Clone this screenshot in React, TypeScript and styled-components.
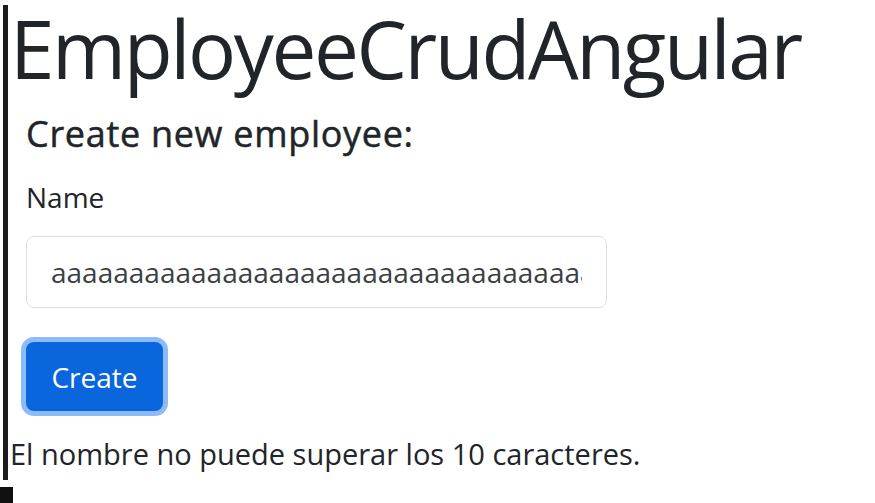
import React from 'react';
import styled, { createGlobalStyle } from 'styled-components';

const GlobalStyle = createGlobalStyle`
  html, body {
    margin: 0;
    padding: 0;
    background: #ffffff;
  }
  body {
    font-family: 'Open Sans', 'Noto Sans', sans-serif;
    color: #212529;
  }
`;

const Frame = styled.div`
  margin: 5px 0 0 3px;
  border-left: 5px solid #1c1c1c;
  padding-left: 2px;
  height: 475px;
  box-sizing: border-box;
`;

const Title = styled.h1`
  margin: 0;
  font-size: 80px;
  font-weight: 400;
  letter-spacing: -2.4px;
  line-height: 86px;
  color: #212529;
  white-space: nowrap;
`;

const Form = styled.form`
  padding-left: 16px;
`;

const Heading = styled.h2`
  margin: 23px 0 0;
  font-size: 36px;
  font-weight: 400;
  letter-spacing: 0.7px;
  line-height: 40px;
  -webkit-text-stroke: 0.5px #212529;
`;

const Label = styled.label`
  display: block;
  margin-top: 25px;
  font-size: 28px;
  line-height: 36px;
`;

const TextInput = styled.input`
  display: block;
  box-sizing: border-box;
  margin-top: 21px;
  width: 581px;
  height: 72px;
  padding: 0 24px;
  border: 1.5px solid #dcdfe3;
  border-radius: 8px;
  font-family: 'Open Sans', 'Noto Sans', sans-serif;
  font-size: 28px;
  color: #3b4046;
  background: #fff;
  outline: none;
`;

const Button = styled.button<{ $focused?: boolean }>`
  display: block;
  margin-top: 34px;
  width: 137px;
  height: 69px;
  border: none;
  border-radius: 8px;
  background: #0a66dc;
  color: #ffffff;
  font-family: 'Open Sans', 'Noto Sans', sans-serif;
  font-size: 28px;
  box-shadow: ${(p) => (p.$focused ? '0 0 0 5px #8dbbf9' : 'none')};
  cursor: pointer;
`;

const ErrorText = styled.div`
  margin-top: 23px;
  font-size: 29px;
  line-height: 40px;
  color: #212529;
  white-space: nowrap;
`;

const Marker = styled.div`
  margin-top: 7px;
  width: 13px;
  height: 16px;
  background: #111111;
`;

export default function App() {
  return (
    <>
      <GlobalStyle />
      <Frame>
        <Title>EmployeeCrudAngular</Title>
        <Form onSubmit={(e) => e.preventDefault()}>
          <Heading>Create new employee:</Heading>
          <Label htmlFor="name">Name</Label>
          <TextInput id="name" defaultValue="aaaaaaaaaaaaaaaaaaaaaaaaaaaaaaaaaaaaaaa" />
          <Button type="submit" $focused>Create</Button>
        </Form>
        <ErrorText>El nombre no puede superar los 10 caracteres.</ErrorText>
      </Frame>
      <Marker />
    </>
  );
}
